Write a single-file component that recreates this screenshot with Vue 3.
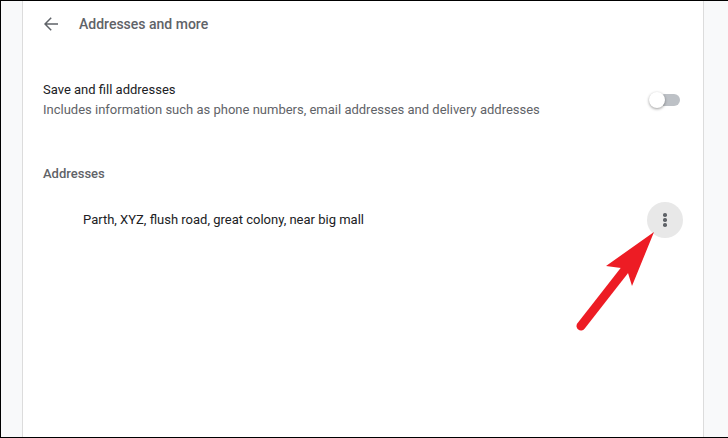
<script setup>
const address = 'Parth, XYZ, flush road, great colony, near big mall'
</script>

<template>
  <div class="page">
    <div class="card">
      <div class="header">
        <svg class="back" width="14" height="14" viewBox="0 0 14 14">
          <path d="M14 7H1.4M7.2 .8 1 7l6.2 6.2" fill="none" stroke="#5f6368" stroke-width="1.5" />
        </svg>
        <h1 class="title">Addresses and more</h1>
      </div>

      <div class="setting">
        <div>
          <div class="label">Save and fill addresses</div>
          <div class="sub">Includes information such as phone numbers, email addresses and delivery addresses</div>
        </div>
        <div class="toggle"><span class="knob"></span></div>
      </div>

      <div class="section">Addresses</div>

      <div class="row">
        <span class="addr">{{ address }}</span>
        <button class="more">
          <span></span><span></span><span></span>
        </button>
      </div>
    </div>

    <svg class="arrow" width="110" height="130" viewBox="0 0 110 130">
      <line x1="9" y1="125" x2="52" y2="70" stroke="#ed1c24" stroke-width="9" stroke-linecap="round" />
      <polygon points="82,31 34,65 49,67 56,72 60,85" fill="#ed1c24" />
    </svg>
  </div>
</template>

<style scoped>
.page {
  position: relative;
  box-sizing: border-box;
  width: 728px;
  height: 438px;
  padding: 0 24px 0 21px;
  background: #f8f9fa;
  border-top: 1px solid #000;
  border-left: 1px solid #000;
  border-bottom: 1px solid #000;
  font-family: Roboto, "Liberation Sans", sans-serif;
  overflow: hidden;
}
.card {
  box-sizing: border-box;
  height: 100%;
  background: #fff;
  border-left: 1px solid #dcdcdc;
  border-right: 1px solid #dcdcdc;
  padding: 0 20px;
}
.header {
  display: flex;
  align-items: center;
  height: 45px;
}
.back {
  display: block;
  margin-left: 1px;
}
.title {
  margin: 0 0 0 21px;
  font-size: 14px;
  font-weight: 500;
  color: #5f6368;
}
.setting {
  display: flex;
  align-items: center;
  justify-content: space-between;
  margin-top: 34px;
  padding-right: 3px;
}
.label {
  font-size: 13px;
  line-height: 20px;
  color: #202124;
}
.sub {
  font-size: 13px;
  line-height: 20px;
  color: #5f6368;
}
.toggle {
  position: relative;
  width: 22px;
  height: 12px;
  border-radius: 6px;
  background: #bdc1c6;
}
.knob {
  position: absolute;
  left: -9px;
  top: -2px;
  width: 16px;
  height: 16px;
  border-radius: 50%;
  background: #fff;
  box-shadow: 0 1px 3px rgba(0, 0, 0, 0.4);
}
.section {
  margin-top: 44px;
  font-size: 13px;
  font-weight: 500;
  line-height: 20px;
  color: #5f6368;
}
.row {
  display: flex;
  align-items: center;
  justify-content: space-between;
  margin-top: 18px;
  padding: 0 0 0 40px;
}
.addr {
  margin-bottom: 2px;
  font-size: 13px;
  color: #202124;
}
.more {
  display: flex;
  flex-direction: column;
  align-items: center;
  justify-content: center;
  gap: 1.5px;
  width: 36px;
  height: 36px;
  padding: 0;
  border: 0;
  border-radius: 50%;
  background: #e8e8e8;
}
.more span {
  width: 3.5px;
  height: 3.5px;
  border-radius: 50%;
  background: #5f6368;
}
.arrow {
  position: absolute;
  left: 571px;
  top: 200px;
}
</style>
